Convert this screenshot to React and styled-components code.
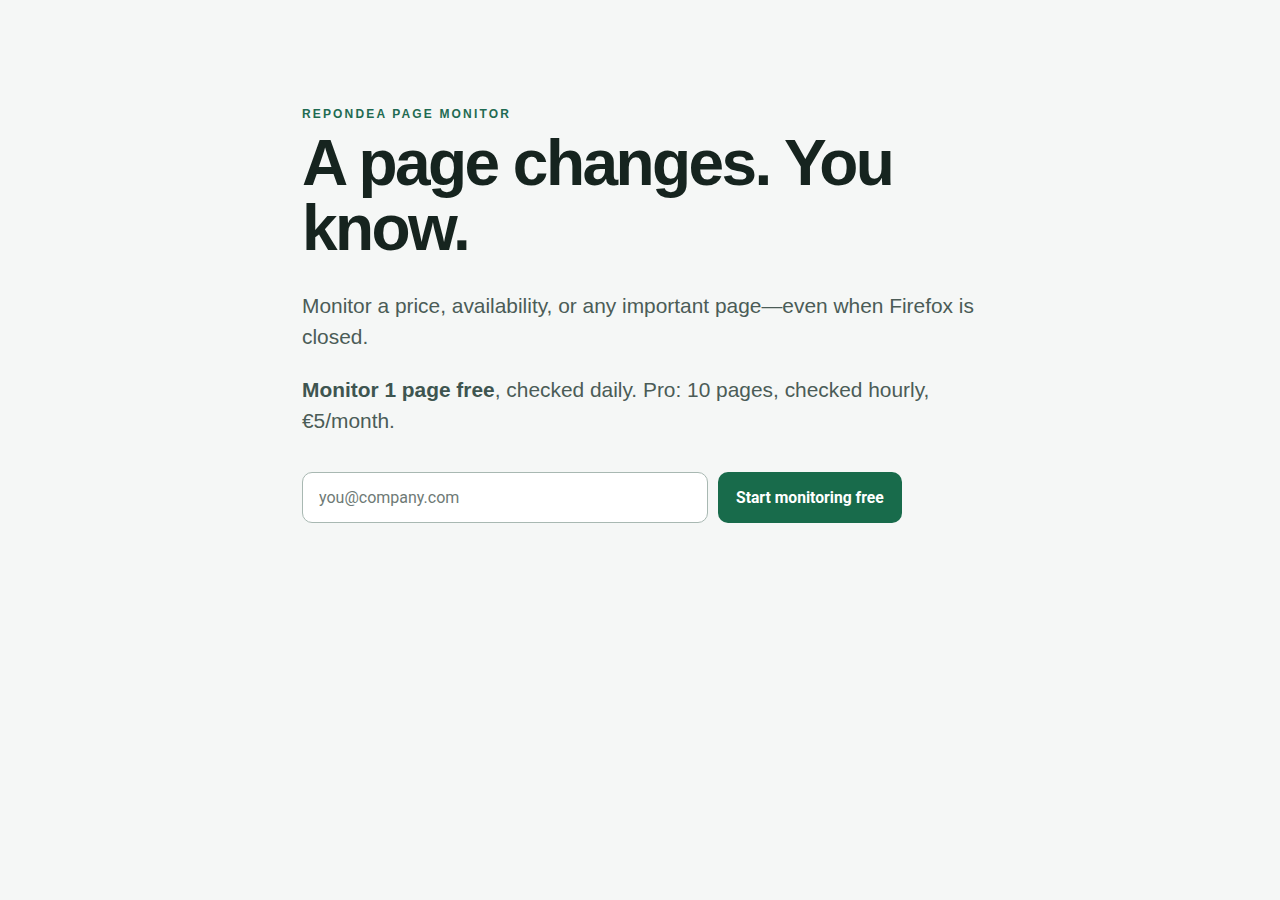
import React from 'react';
import styled, { createGlobalStyle } from 'styled-components';

const GlobalStyle = createGlobalStyle`
  html, body {
    margin: 0;
    padding: 0;
    background: #f5f7f6;
  }
  body {
    font-family: 'Liberation Sans', Arial, sans-serif;
    color: #16241f;
  }
`;

const Page = styled.main`
  min-height: 100vh;
  background: #f5f7f6;
`;

const Hero = styled.section`
  max-width: 676px;
  margin: 0 auto;
  padding-top: 107px;
`;

const Eyebrow = styled.div`
  font-size: 12px;
  font-weight: 700;
  letter-spacing: 2.15px;
  text-transform: uppercase;
  color: #1f6b52;
  margin-bottom: 10px;
`;

const Title = styled.h1`
  margin: 0 0 29px;
  font-size: 64px;
  line-height: 65px;
  font-weight: 700;
  letter-spacing: -0.04em;
  color: #16241f;
`;

const Lead = styled.p`
  margin: 0 0 22px;
  font-size: 20.9px;
  line-height: 31px;
  color: #4b5c57;

  strong {
    color: #3e5550;
    font-weight: 700;
  }
`;

const SignupForm = styled.form`
  display: flex;
  gap: 10px;
  margin-top: 36px;
`;

const EmailInput = styled.input`
  width: 406px;
  height: 51px;
  box-sizing: border-box;
  padding: 0 16px;
  border: 1px solid #a8b8b2;
  border-radius: 10px;
  background: #ffffff;
  font-family: Roboto, 'Liberation Sans', sans-serif;
  font-size: 16px;
  color: #16241f;
  outline: none;

  &::placeholder {
    color: #6e7a76;
  }
`;

const SubmitButton = styled.button`
  height: 51px;
  padding: 0 18px;
  border: none;
  border-radius: 10px;
  background: #186b4b;
  color: #ffffff;
  font-family: Roboto, 'Liberation Sans', sans-serif;
  font-size: 15.7px;
  font-weight: 700;
  cursor: pointer;
`;

export default function App() {
  return (
    <>
      <GlobalStyle />
      <Page>
        <Hero>
          <Eyebrow>Repondea Page Monitor</Eyebrow>
          <Title>A page changes. You know.</Title>
          <Lead>
            Monitor a price, availability, or any important page—even when Firefox is closed.
          </Lead>
          <Lead>
            <strong>Monitor 1 page free</strong>, checked daily. Pro: 10 pages, checked hourly,
            €5/month.
          </Lead>
          <SignupForm onSubmit={(e) => e.preventDefault()}>
            <EmailInput type="email" placeholder="you@company.com" />
            <SubmitButton type="submit">Start monitoring free</SubmitButton>
          </SignupForm>
        </Hero>
      </Page>
    </>
  );
}
